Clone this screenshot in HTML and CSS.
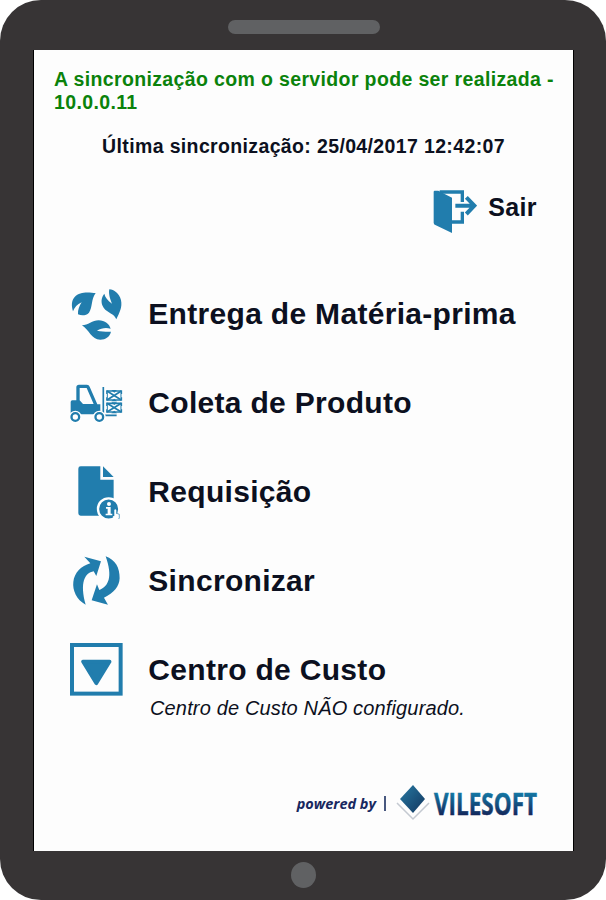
FILE: index.html
```html
<!DOCTYPE html>
<html lang="pt-BR">
<head>
  <meta charset="UTF-8">
  <meta name="viewport" content="width=device-width, initial-scale=1.0">
  <title>Vilesoft Coletor</title>
  <link rel="stylesheet" href="styles.css">
</head>
<body>
  <div class="tablet">
    <div class="speaker"></div>

    <div class="screen">
      <header class="status">
        <p class="server-status">A sincronização com o servidor pode ser realizada - 10.0.0.11</p>
        <p class="last-sync">Última sincronização: 25/04/2017 12:42:07</p>
      </header>

      <a class="logout">
        <svg class="logout-icon" viewBox="0 0 132 129">
          <path d="M20 6H88V36M88 65V96H54" fill="none" stroke="currentColor" stroke-width="10"/>
          <path d="M5 2H16L57 23V129L7 105Q2 103 2 98V6Q2 2 5 2Z"/>
          <path d="M67 47H122M100 22L124 47L100 72" fill="none" stroke="currentColor" stroke-width="12"/>
        </svg>
        <span>Sair</span>
      </a>

      <!-- Menu -->
      <nav class="menu">
        <a class="menu-item">
          <svg class="menu-icon" viewBox="30 25 160 160">
            <path d="M107 40C91 39 60 33 44 52C34 63 34 79 39 95C44 83 51 74 65 68C58 79 53 91 54 104C65 109 79 108 87 99C98 83 93 59 107 40Z"/>
            <path d="M148 29C162 30 178 41 183 61C188 83 178 100 169 119C163 101 143 101 131 84C121 69 124 53 133 42C136 53 142 62 156 72C151 59 145 44 148 29Z"/>
            <path d="M66 137C84 137 97 122 116 122C135 122 148 133 152 147C138 143 124 145 111 153C126 155 140 157 153 156C150 171 137 180 121 180C94 180 88 151 66 137Z"/>
          </svg>
          <span class="menu-label">Entrega de Matéria-prima</span>
        </a>

        <a class="menu-item">
          <svg class="menu-icon" viewBox="30 15 160 160">
            <path fill-rule="evenodd" d="M32 93Q32 88 37 88H49V49Q49 41 57 41H81Q87 41 89 47L112 100H121V130H32ZM59 51V88L69 99H101L80 51Z"/>
            <path d="M130 48V126M130 133H170" fill="none" stroke="currentColor" stroke-width="5"/>
            <g stroke="#fff" stroke-width="4">
              <circle cx="46" cy="138" r="17"/>
              <circle cx="118" cy="138" r="17"/>
            </g>
            <g fill="#fff">
              <circle cx="46" cy="138" r="8"/>
              <circle cx="118" cy="138" r="8"/>
            </g>
            <g fill="none" stroke="currentColor" stroke-width="5">
              <path d="M141 60H184V87H141ZM141 97H184V123H141Z"/>
              <path d="M141 60L184 87M184 60L141 87M141 97L184 123M184 97L141 123"/>
            </g>
            <path d="M154 57h17l-8 8zM154 91h17l-8-8zM154 94h17l-8 8zM154 127h17l-8-8z"/>
            <path d="M138 69v10M187 69v10M138 105v10M187 105v10" stroke="#fff" stroke-width="5"/>
          </svg>
          <span class="menu-label">Coleta de Produto</span>
        </a>

        <a class="menu-item">
          <svg class="menu-icon" viewBox="30 19 160 160">
            <path d="M62 23H121V63H161V171H62Q55 171 55 164V30Q55 23 62 23Z"/>
            <path d="M129 23L161 55H129Z"/>
            <circle cx="146" cy="151" r="32" stroke="#fff" stroke-width="7"/>
            <g fill="#fff">
              <circle cx="147" cy="136" r="6"/>
              <path d="M138 145H152V165H157V170H137V165H143V150H138Z"/>
              <path d="M163 154Q166 150 169 154V165L177 167V182H164L158 172L163 173Z"/>
            </g>
            <path d="M170 164L178 167V178Q177 184 169 184" fill="none" stroke="currentColor" stroke-width="2"/>
          </svg>
          <span class="menu-label">Requisição</span>
        </a>

        <a class="menu-item">
          <svg class="menu-icon" viewBox="30 26 160 160">
            <path d="M73 34L123 48L109 92L101 78C74 83 59 112 77 178C49 163 37 134 40 110C43 82 64 62 91 54Z"/>
            <path d="M137 33C166 43 180 68 179 99C178 123 162 143 132 157L144 178L95 165L111 117L118 134C146 123 159 95 137 33Z"/>
          </svg>
          <span class="menu-label">Sincronizar</span>
        </a>

        <a class="menu-item">
          <svg class="menu-icon" viewBox="30 24 160 160">
            <rect x="36" y="30" width="146" height="146" fill="none" stroke="currentColor" stroke-width="12"/>
            <path d="M69 80H149L109 145Z" stroke="currentColor" stroke-width="11" stroke-linejoin="round"/>
          </svg>
          <span class="menu-label">Centro de Custo</span>
        </a>
      </nav>
      <p class="menu-note">Centro de Custo NÃO configurado.</p>

      <footer class="powered">
        <span class="powered-text">powered by</span>
        <span class="divider"></span>
        <svg class="brand" viewBox="0 -4 146 52">
          <defs>
            <linearGradient id="brand-blue" x1="0" y1="0" x2="0" y2="1">
              <stop offset="0.25" stop-color="#1379a6"/>
              <stop offset="0.8" stop-color="#13265a"/>
            </linearGradient>
            <linearGradient id="diamond-blue" x1="0" y1="0" x2="1" y2="1">
              <stop offset="0" stop-color="#2779a2"/>
              <stop offset="1" stop-color="#12365f"/>
            </linearGradient>
          </defs>
          <path d="M3 21L19 37L35 21" fill="none" stroke="#c4c9d1" stroke-width="1.5"/>
          <path d="M19 3L31 17L19 31L6 17Z" fill="url(#diamond-blue)"/>
          <text class="brand-name" x="40" y="33" textLength="103" lengthAdjust="spacingAndGlyphs">VILESOFT</text>
        </svg>
      </footer>
    </div>

    <div class="home-button"></div>
  </div>
</body>
</html>
```

FILE: styles.css
```css
:root {
  --bezel: #373435;
  --bezel-light: #606163;
  --icon-color: #217dad;
  --text-color: #0c1020;
  --success: #0b820b;
}

* {
  box-sizing: border-box;
  margin: 0;
  padding: 0;
}

body {
  background-color: #fff;
  color: var(--text-color);
  font-family: "Liberation Sans", Arial, sans-serif;
}

.tablet {
  width: 606px;
  height: 900px;
  padding: 20px 32px 12px 33px;
  background-color: var(--bezel);
  border-radius: 41px;
  display: flex;
  flex-direction: column;
  align-items: center;
}

.speaker {
  width: 152px;
  height: 14px;
  margin-bottom: 16px;
  border-radius: 7px;
  background-color: var(--bezel-light);
}

.screen {
  width: 541px;
  height: 801px;
  padding: 18px 18px 0 20px;
  background-color: #fdfdfd;
  border: solid #000;
  border-width: 0 1px;
  display: flex;
  flex-direction: column;
}

.home-button {
  width: 25px;
  height: 26px;
  margin-top: 11px;
  border-radius: 50%;
  background-color: var(--bezel-light);
}

/* Status */
.status {
  font-size: 19.5px;
  font-weight: bold;
  line-height: 22.5px;
  letter-spacing: 0.36px;
}

.server-status {
  color: var(--success);
}

.last-sync {
  margin-top: 22px;
  padding-right: 2px;
  text-align: center;
}

.logout {
  display: flex;
  align-items: flex-start;
  align-self: flex-end;
  gap: 11px;
  height: 44px;
  margin: 32px 18px 0 0;
  font-size: 25px;
  font-weight: bold;
  line-height: 34px;
  letter-spacing: 0.4px;
}

.logout-icon {
  width: 44px;
  height: 43px;
  color: var(--icon-color);
  fill: currentColor;
}

/* Menu */
.menu {
  display: flex;
  flex-direction: column;
  gap: 35.7px;
  margin: 54px 0 0 16px;
}

.menu-item {
  display: flex;
  align-items: center;
  gap: 25px;
}

.menu-icon {
  flex: none;
  width: 53.3px;
  height: 53.3px;
  color: var(--icon-color);
  fill: currentColor;
}

.menu-label {
  font-size: 30px;
  font-weight: bold;
  line-height: 36px;
  letter-spacing: 0.31px;
}

.menu-note {
  margin: -1px 0 0 96px;
  font-size: 20px;
  font-style: italic;
  line-height: 24px;
  letter-spacing: 0.15px;
}

/* Footer */
.powered {
  display: flex;
  align-items: center;
  align-self: flex-end;
  margin: 58px 15px 0 0;
  color: #18285f;
}

.powered-text {
  font-family: "Open Sans", sans-serif;
  font-size: 14.5px;
  font-style: italic;
  font-weight: 700;
}

.divider {
  width: 2px;
  height: 15px;
  margin: 0 8px;
  background-color: #48587f;
}

.brand {
  width: 146px;
  height: 52px;
  overflow: visible;
}

.brand-name {
  font-family: "Open Sans", sans-serif;
  font-size: 31px;
  font-weight: 700;
  fill: url(#brand-blue);
  stroke: url(#brand-blue);
  stroke-width: 0.5px;
}
```
